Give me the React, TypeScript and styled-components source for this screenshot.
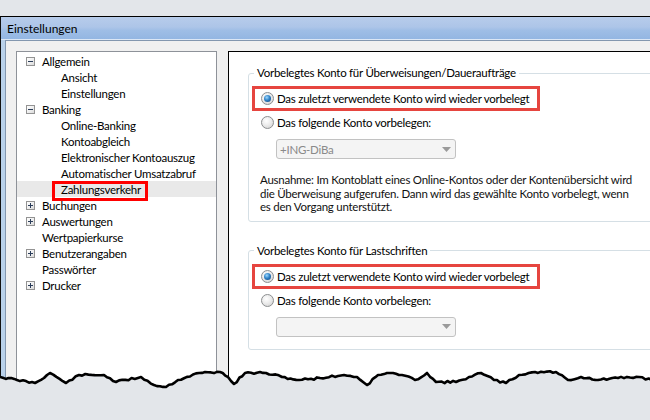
import React from 'react';
import styled, { createGlobalStyle } from 'styled-components';

const FONT = `Lato, "Noto Sans", sans-serif`;

const Global = createGlobalStyle`
  html, body { margin: 0; padding: 0; background: #e3e6ea; }
  body {
    font-family: ${FONT};
    font-size: 11.5px;
    color: #000;
  }
  * { box-sizing: border-box; }
`;

const Page = styled.div`
  position: relative;
  width: 650px;
  height: 420px;
  overflow: hidden;
  background: #e3e6ea;
  padding-top: 16px;
`;

const Window = styled.div`
  width: 700px;
  height: 404px;
  border-top: 1px solid #000;
  border-left: 1px solid #111;
  display: flex;
  flex-direction: column;
  background: #b9d1ea;
`;

const TitleBar = styled.div`
  height: 23px;
  flex: none;
  display: flex;
  align-items: center;
  padding-left: 6px;
  font-family: ${FONT};
  font-size: 12px;
  color: #000;
  background: linear-gradient(to bottom, #b7cceb 0%, #adc5e8 45%, #9fbee6 60%, #93b6e2 100%);
  border-bottom: 1px solid #dce7f5;
`;

const Frame = styled.div`
  flex: 1;
  display: flex;
  padding-left: 4px;
  background: #b9d1ea;
`;

const Client = styled.div`
  flex: 1;
  display: flex;
  gap: 11px;
  padding: 10px 0 0 10px;
  background: #f0f0f0;
  border-top: 1px solid #8397af;
  border-left: 1px solid #8397af;
`;

const TreePanel = styled.div`
  width: 201px;
  flex: none;
  background: #fff;
  border: 1px solid #8e9299;
  padding-top: 1px;
`;

const TreeRow = styled.div<{ $level: number; $selected?: boolean }>`
  position: relative;
  height: 16px;
  display: flex;
  align-items: center;
  padding-left: ${p => (p.$level ? 44 : 9)}px;
  background: ${p => (p.$selected ? '#e9e9e9' : 'transparent')};
  font-family: ${FONT};
  font-size: 11.5px;
  letter-spacing: -0.25px;
  white-space: nowrap;
`;

const ExpanderSlot = styled.div`
  width: 9px;
  height: 9px;
  margin-right: 7px;
  flex: none;
`;

const ExpanderBox = styled.div`
  width: 9px;
  height: 9px;
  border: 1px solid #939393;
  background: linear-gradient(to bottom right, #ffffff 0%, #ececec 60%, #d9d9d9 100%);
  position: relative;
`;

const Mark = styled.div<{ $vertical?: boolean }>`
  position: absolute;
  background: #2b3d5a;
  ${p =>
    p.$vertical
      ? 'left: 3px; top: 1px; width: 1px; height: 5px;'
      : 'left: 1px; top: 3px; width: 5px; height: 1px;'}
`;

const TreeHighlight = styled.div`
  position: absolute;
  left: 35px;
  top: 0;
  width: 96px;
  height: 20px;
  border: 3px solid #ff0000;
`;

const RightPanel = styled.div`
  flex: 1;
  background: #fff;
  border-top: 1px solid #000;
  border-left: 1px solid #000;
  padding: 13px 0 0 19px;
  display: flex;
  flex-direction: column;
`;

const GroupBox = styled.fieldset<{ $gapTop: number; $padBottom: number }>`
  margin: ${p => p.$gapTop}px 0 0 0;
  padding: 0 0 ${p => p.$padBottom}px 0;
  width: 460px;
  border: 1px solid #d5dfe5;
  border-radius: 3px;
  display: flex;
  flex-direction: column;
  align-items: flex-start;
  min-width: 0;
`;

const Legend = styled.legend`
  margin-left: 5px;
  padding: 0 3px;
  line-height: 16px;
  font-family: ${FONT};
  font-size: 11.5px;
  letter-spacing: -0.25px;
  color: #000;
`;

const Highlight = styled.div`
  margin: 5px 0 0 3px;
  border: 3px solid #e6453f;
  padding: 2px 8px 2px 6px;
  display: flex;
`;

const RadioRow = styled.div<{ $indent?: number; $top?: number }>`
  display: flex;
  align-items: center;
  height: 15px;
  gap: 3px;
  margin-left: ${p => p.$indent ?? 0}px;
  margin-top: ${p => p.$top ?? 0}px;
  font-family: ${FONT};
  font-size: 11.5px;
  letter-spacing: -0.25px;
  white-space: nowrap;
`;

const RadioCircle = styled.span`
  width: 13px;
  height: 13px;
  border-radius: 50%;
  border: 1px solid #8c8e90;
  background: radial-gradient(circle at 40% 35%, #ffffff 0%, #ececec 45%, #cdcdcd 100%);
  display: flex;
  align-items: center;
  justify-content: center;
  flex: none;
`;

const RadioDot = styled.span`
  width: 7px;
  height: 7px;
  border-radius: 50%;
  background: radial-gradient(circle at 40% 35%, #9ed8ff 0%, #3184c8 45%, #0d3e78 100%);
`;

const Combo = styled.div`
  margin: 9px 0 0 27px;
  width: 180px;
  height: 20px;
  border: 1px solid #c2c2c2;
  border-radius: 3px;
  background: #f4f4f4;
  display: flex;
  align-items: center;
  justify-content: space-between;
  padding: 0 4px 0 3px;
  font-family: ${FONT};
  font-size: 11.5px;
  letter-spacing: -0.25px;
  color: #8a8a8a;
`;

const Note = styled.div`
  margin: 14px 0 0 11px;
  line-height: 13.5px;
  font-family: ${FONT};
  font-size: 11.5px;
  letter-spacing: -0.25px;
  color: #111;
  white-space: nowrap;
`;

const TearSvg = styled.svg`
  position: absolute;
  left: 0;
  top: 0;
  width: 650px;
  height: 420px;
  pointer-events: none;
`;

const Radio = ({ checked }: { checked?: boolean }) => (
  <RadioCircle>{checked && <RadioDot />}</RadioCircle>
);

const ComboArrow = () => (
  <svg width="9" height="5" viewBox="0 0 9 5">
    <path d="M0 0 L9 0 L4.5 5 Z" fill="#9a9a9a" />
  </svg>
);

type Node = { label: string; level: number; exp?: 'plus' | 'minus' | 'none'; selected?: boolean };

const tree: Node[] = [
  { label: 'Allgemein', level: 0, exp: 'minus' },
  { label: 'Ansicht', level: 1 },
  { label: 'Einstellungen', level: 1 },
  { label: 'Banking', level: 0, exp: 'minus' },
  { label: 'Online-Banking', level: 1 },
  { label: 'Kontoabgleich', level: 1 },
  { label: 'Elektronischer Kontoauszug', level: 1 },
  { label: 'Automatischer Umsatzabruf', level: 1 },
  { label: 'Zahlungsverkehr', level: 1, selected: true },
  { label: 'Buchungen', level: 0, exp: 'plus' },
  { label: 'Auswertungen', level: 0, exp: 'plus' },
  { label: 'Wertpapierkurse', level: 0, exp: 'none' },
  { label: 'Benutzerangaben', level: 0, exp: 'plus' },
  { label: 'Passwörter', level: 0, exp: 'none' },
  { label: 'Drucker', level: 0, exp: 'plus' },
];

const keyPts: [number, number][] = [
  [0, 377], [17, 380], [35, 383], [50, 373], [66, 383], [79, 375], [104, 375], [116, 382],
  [141, 377], [154, 385], [166, 387], [178, 380], [199, 373], [220, 372], [228, 377], [234, 384],
  [245, 373], [266, 373], [282, 377], [299, 380], [320, 378], [344, 375], [357, 377], [367, 385],
  [378, 375], [390, 373], [402, 375], [415, 380], [427, 373], [436, 382], [456, 382], [469, 377],
  [481, 373], [494, 380], [506, 383], [519, 375], [535, 372], [556, 372], [568, 380], [581, 377],
  [598, 380], [618, 378], [639, 377], [652, 380],
];

function buildTear() {
  let seed = 11;
  const rnd = () => {
    seed = (seed * 9301 + 49297) % 233280;
    return seed / 233280;
  };
  const pts: [number, number][] = [];
  for (let i = 0; i < keyPts.length - 1; i++) {
    const [x1, y1] = keyPts[i];
    const [x2, y2] = keyPts[i + 1];
    const n = Math.max(1, Math.round((x2 - x1) / 3));
    for (let j = 0; j < n; j++) {
      const t = j / n;
      pts.push([x1 + (x2 - x1) * t, y1 + (y2 - y1) * t + (j === 0 ? 0 : (rnd() - 0.5) * 2.2)]);
    }
  }
  pts.push(keyPts[keyPts.length - 1]);
  const line = pts.map((p, i) => `${i ? 'L' : 'M'}${p[0].toFixed(1)} ${p[1].toFixed(1)}`).join(' ');
  return { line, fill: `${line} L652 422 L0 422 Z` };
}

const tear = buildTear();

export default function App() {
  return (
    <Page>
      <Global />
      <Window>
        <TitleBar>Einstellungen</TitleBar>
        <Frame>
          <Client>
            <TreePanel>
              {tree.map(n => (
                <TreeRow key={n.label} $level={n.level} $selected={n.selected}>
                  {n.level === 0 && (
                    <ExpanderSlot>
                      {n.exp !== 'none' && (
                        <ExpanderBox>
                          <Mark />
                          {n.exp === 'plus' && <Mark $vertical />}
                        </ExpanderBox>
                      )}
                    </ExpanderSlot>
                  )}
                  {n.label}
                  {n.selected && <TreeHighlight />}
                </TreeRow>
              ))}
            </TreePanel>
            <RightPanel>
              <GroupBox $gapTop={0} $padBottom={7}>
                <Legend>Vorbelegtes Konto für Überweisungen/Daueraufträge</Legend>
                <Highlight>
                  <RadioRow>
                    <Radio checked />
                    Das zuletzt verwendete Konto wird wieder vorbelegt
                  </RadioRow>
                </Highlight>
                <RadioRow $indent={12} $top={4}>
                  <Radio />
                  Das folgende Konto vorbelegen:
                </RadioRow>
                <Combo>
                  <span>+ING-DiBa</span>
                  <ComboArrow />
                </Combo>
                <Note>
                  Ausnahme: Im Kontoblatt eines Online-Kontos oder der Kontenübersicht wird
                  <br />
                  die Überweisung aufgerufen. Dann wird das gewählte Konto vorbelegt, wenn
                  <br />
                  es den Vorgang unterstützt.
                </Note>
              </GroupBox>
              <GroupBox $gapTop={21} $padBottom={12}>
                <Legend>Vorbelegtes Konto für Lastschriften</Legend>
                <Highlight>
                  <RadioRow>
                    <Radio checked />
                    Das zuletzt verwendete Konto wird wieder vorbelegt
                  </RadioRow>
                </Highlight>
                <RadioRow $indent={12} $top={4}>
                  <Radio />
                  Das folgende Konto vorbelegen:
                </RadioRow>
                <Combo>
                  <span />
                  <ComboArrow />
                </Combo>
              </GroupBox>
            </RightPanel>
          </Client>
        </Frame>
      </Window>
      <TearSvg viewBox="0 0 650 420">
        <path d={tear.fill} fill="#e3e6ea" />
        <path d={tear.line} fill="none" stroke="#000" strokeWidth={2.6} strokeLinejoin="round" />
      </TearSvg>
    </Page>
  );
}
